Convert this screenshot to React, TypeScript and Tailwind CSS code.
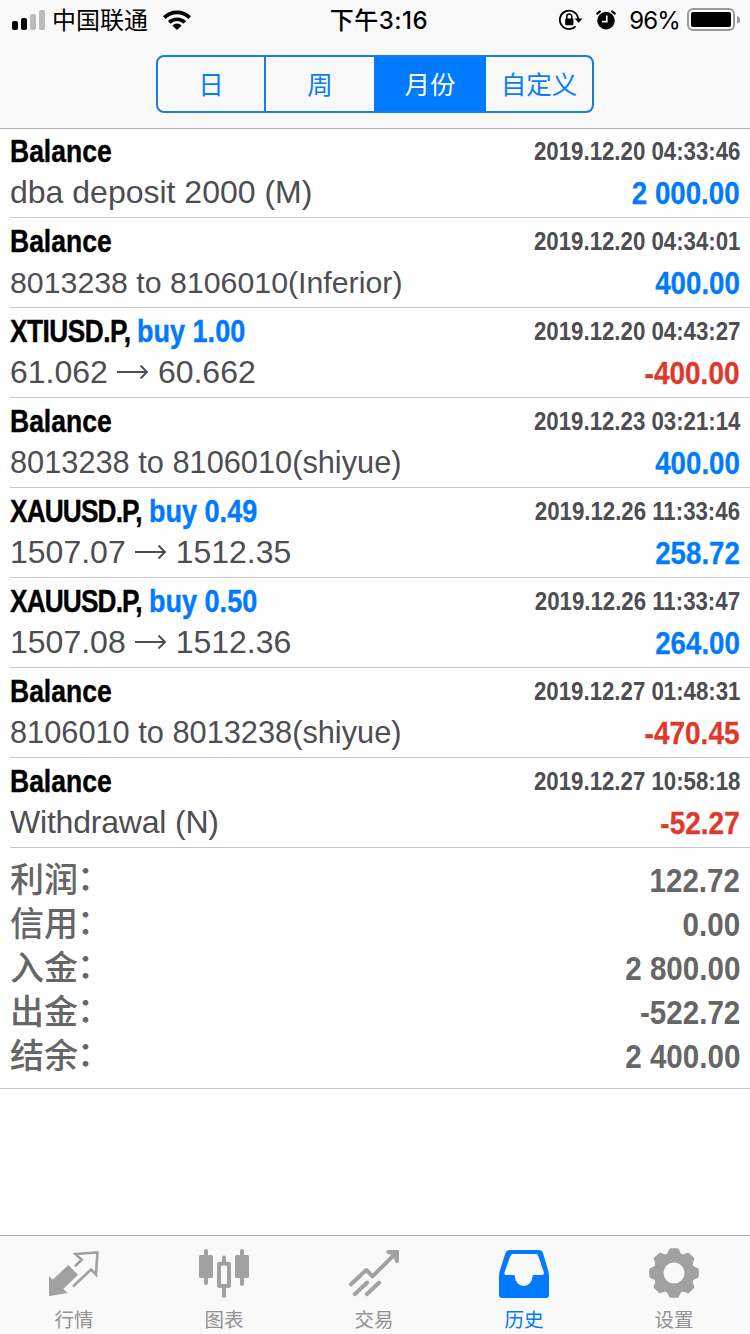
import type { ReactNode } from "react";
import clsx from "clsx";

type Deal = {
  symbol: string;
  side?: string;
  from: string;
  to?: string;
  time: string;
  amount: string;
  noteSize?: string;
};

const deals: Deal[] = [
  { symbol: "Balance", from: "dba deposit 2000 (M)", time: "2019.12.20 04:33:46", amount: "2 000.00" },
  { symbol: "Balance", from: "8013238 to 8106010(Inferior)", time: "2019.12.20 04:34:01", amount: "400.00", noteSize: "text-[30.3px]" },
  { symbol: "XTIUSD.P,", side: "buy 1.00", from: "61.062", to: "60.662", time: "2019.12.20 04:43:27", amount: "-400.00" },
  { symbol: "Balance", from: "8013238 to 8106010(shiyue)", time: "2019.12.23 03:21:14", amount: "400.00", noteSize: "text-[30.75px]" },
  { symbol: "XAUUSD.P,", side: "buy 0.49", from: "1507.07", to: "1512.35", time: "2019.12.26 11:33:46", amount: "258.72" },
  { symbol: "XAUUSD.P,", side: "buy 0.50", from: "1507.08", to: "1512.36", time: "2019.12.26 11:33:47", amount: "264.00" },
  { symbol: "Balance", from: "8106010 to 8013238(shiyue)", time: "2019.12.27 01:48:31", amount: "-470.45", noteSize: "text-[30.75px]" },
  { symbol: "Balance", from: "Withdrawal (N)", time: "2019.12.27 10:58:18", amount: "-52.27", noteSize: "text-[32px] tracking-[-0.2px]" },
];

const totals = [
  ["利润", "122.72"],
  ["信用", "0.00"],
  ["入金", "2 800.00"],
  ["出金", "-522.72"],
  ["结余", "2 400.00"],
];

const StatusBar = () => (
  <div className="flex h-10 items-center justify-between pl-3 pr-2.5 text-2xl leading-10 text-black">
    <div className="flex w-[240px] items-center">
      <svg className="mr-[7px] h-5 w-[33px] shrink-0" viewBox="0 0 33 20">
        <rect x="0" y="11" width="6" height="9" rx="2" />
        <rect x="9" y="8" width="6" height="12" rx="2" />
        <rect x="18" y="4" width="6" height="16" rx="2" fill="#bbb" />
        <rect x="27" y="0" width="6" height="20" rx="2" fill="#bbb" />
      </svg>
      <span className="pt-0.5">中国联通</span>
      <svg className="ml-[15px] h-5 w-7" viewBox="0 0 28 20" fill="none" stroke="#000" strokeWidth="3.6">
        <path d="M1.3 7.6a18 18 0 0 1 25.4 0" />
        <path d="M6.2 12.4a11.3 11.3 0 0 1 15.6 0" />
        <path d="M9.4 15.4a6.7 6.7 0 0 1 9.2 0L14 20z" fill="#000" stroke="none" />
      </svg>
    </div>
    <span className="pt-0.5 pl-1.5 font-medium tracking-[0.5px]">下午3:16</span>
    <div className="flex w-[240px] items-center justify-end">
      <svg className="mr-[13px] h-[22px] w-[24px]" viewBox="0 0 24 22" fill="none" stroke="#000" strokeWidth="1.8">
        <path d="M19.2 9.8A9.2 9.2 0 1 0 16.6 17.3" />
        <path d="M15.6 9.4H23.6L19.6 13.8z" fill="#000" stroke="none" />
        <rect x="6.2" y="9.6" width="8.2" height="6.6" rx="1" fill="#000" stroke="none" />
        <path d="M7.8 10V7.6a2.5 2.5 0 0 1 5 0V10" strokeWidth="1.5" />
      </svg>
      <svg className="mr-[13px] h-5 w-5" viewBox="0 0 20 20">
        <circle cx="10" cy="10.6" r="8.8" />
        <path d="M1.2 3.6 4 1.4M18.8 3.6 16 1.4" stroke="#000" strokeWidth="2" strokeLinecap="round" />
        <path d="M10.8 5.5V11.6H6" fill="none" stroke="#f9f9f9" strokeWidth="1.6" />
      </svg>
      <span className="mr-[7px] pt-0.5 tracking-[-0.9px]">96%</span>
      <svg className="h-6 w-[53px]" viewBox="0 0 53 24">
        <rect x="1" y="1" width="46" height="21" rx="5" fill="none" stroke="#999" strokeWidth="2" />
        <rect x="4" y="4" width="40" height="15" rx="2" />
        <path d="M50 8a3.8 3.8 0 0 1 0 7.5z" fill="#999" />
      </svg>
    </div>
  </div>
);

const PeriodSwitch = () => (
  <div className="mx-auto mt-[15px] flex h-[58px] w-[438px] overflow-hidden rounded-lg border-2 border-[#1b7be4] text-center text-[25.5px] leading-[55px] text-[#087cfa]">
    <div className="w-[108px] border-r-2 border-[#1b7be4]">日</div>
    <div className="w-[108px]">周</div>
    <div className="w-[112px] bg-[#007aff] text-white">月份</div>
    <div className="w-[106px]">自定义</div>
  </div>
);

const Arrow = () => (
  <svg className="mx-[9px] inline-block h-5 w-8 align-[1px]" viewBox="0 0 32 20" fill="none" stroke="currentColor" strokeWidth="1.9">
    <path d="M0 10H30M23.5 3.5 30 10 23.5 16.5" />
  </svg>
);

const DealRow = ({ deal }: { deal: Deal }) => (
  <div className="flex h-[90px] justify-between border-b border-[#c8c7cc] pr-2.5">
    <div className="pt-1 whitespace-nowrap">
      <div className="flex h-10 text-[32px] leading-[39px] font-bold text-black [-webkit-text-stroke:0.4px]">
        {deal.side ? (
          <>
            <span className={clsx("origin-left scale-x-[0.82]", deal.symbol === "XTIUSD.P," ? "w-[127px] tracking-[-0.6px]" : "w-[138.5px] tracking-[-1.05px]")}>
              {deal.symbol}
            </span>
            <span className="origin-left scale-x-[0.845] text-[#007aff]">{deal.side}</span>
          </>
        ) : (
          <span className="origin-left scale-x-[0.828]">{deal.symbol}</span>
        )}
      </div>
      <div className={clsx("h-10 leading-[41px] text-[#4d4d52]", deal.noteSize ?? "text-[32px]")}>
        {deal.from}
        {deal.to && (
          <>
            <Arrow />
            {deal.to}
          </>
        )}
      </div>
    </div>
    <div className="flex flex-col items-end pt-1 font-bold whitespace-nowrap">
      <div className="h-10 origin-right scale-x-[0.855] text-[26px] leading-[39px] text-[#4d4d52]">{deal.time}</div>
      <div
        className={clsx(
          "h-10 origin-right text-[32px] leading-[42px] [-webkit-text-stroke:0.3px]",
          deal.amount.startsWith("-") ? "scale-x-[0.875] text-[#e0392b]" : "scale-x-[0.865] text-[#007aff]"
        )}
      >
        {deal.amount}
      </div>
    </div>
  </div>
);

const QuotesIcon = () => (
  <>
    <path d="M0 28 3.7 31.7 19.3 17 29 26.7 14.3 41 18.5 45 .8 48Q0 48 0 47.2z" />
    <path d="M26 18.3 32.7 11.7 26.5 6 48.4 4.4 47 26.5 42 21.5 24 38.5" fill="none" stroke="currentColor" strokeWidth="2.6" />
  </>
);

const ChartIcon = () => (
  <>
    <rect x="0" y="7" width="14" height="23" rx="1.5" />
    <rect x="5" y="1" width="4" height="36" rx="2" />
    <rect x="20" y="15.7" width="10" height="22.3" rx="0.5" fill="none" stroke="currentColor" strokeWidth="4" strokeLinejoin="round" />
    <rect x="23" y="7.5" width="4" height="9" rx="2" />
    <rect x="23" y="38" width="4" height="12" rx="2" />
    <rect x="36" y="7" width="14" height="23" rx="1.5" />
    <rect x="41" y="1" width="4" height="37" rx="2" />
  </>
);

const TradeIcon = () => (
  <>
    <path
      d="M2 36.3 17.3 22 23.5 28.3 45.5 6.5M5.8 46.2 18 34.7M17.8 46.2 30 34.7"
      fill="none"
      stroke="currentColor"
      strokeWidth="4"
      strokeLinecap="round"
      strokeLinejoin="round"
    />
    <path d="M39 2H49a1 1 0 0 1 1 1V12.5a2 2 0 0 1-4 1L45 10 41.5 6.5 38.5 5.8A2 2 0 0 1 39 2z" />
  </>
);

const HistoryIcon = () => (
  <path
    fillRule="evenodd"
    d="M11 2H39.5Q43 2 44 5L49 22Q50 25 50 28V47Q50 50 47 50H3Q0 50 0 47V28Q0 25 1 22L6.5 5Q7.5 2 11 2zM14 6Q12 6 11.4 8L5.6 24Q4.8 27 7 27H14.5Q16 27 16 29A8.7 9 0 0 0 33.4 29Q33.4 27 35 27H43Q45.5 27 44.8 24L39.3 8Q38.6 6 36.8 6z"
  />
);

const SettingsIcon = () => (
  <>
    <circle cx="25" cy="25" r="15.5" fill="none" stroke="currentColor" strokeWidth="10" />
    {[0, 45, 90, 135, 180, 225, 270, 315].map((angle) => (
      <path
        key={angle}
        transform={`rotate(${angle} 25 25)`}
        d="M19.2 7 21.8 1.8H28.2L30.8 7z"
        stroke="currentColor"
        strokeWidth="3.2"
        strokeLinejoin="round"
      />
    ))}
  </>
);

const tabs: { label: string; icon: ReactNode; active?: boolean }[] = [
  { label: "行情", icon: <QuotesIcon /> },
  { label: "图表", icon: <ChartIcon /> },
  { label: "交易", icon: <TradeIcon /> },
  { label: "历史", icon: <HistoryIcon />, active: true },
  { label: "设置", icon: <SettingsIcon /> },
];

const App = () => {
  return (
    <div className="flex h-[1334px] w-[750px] flex-col overflow-hidden bg-white font-['Liberation_Sans','Noto_Sans_CJK_SC',sans-serif]">
      <header className="h-[129px] shrink-0 border-b border-[#b2b2b2] bg-[#f9f9f9] font-['Inter','Noto_Sans_CJK_SC',sans-serif]">
        <StatusBar />
        <PeriodSwitch />
      </header>

      <main className="-mt-px grow">
        <div className="pl-2.5">
          {deals.map((deal) => (
            <DealRow key={deal.time} deal={deal} />
          ))}
        </div>

        {/* Totals */}
        <div className="h-[241px] border-b border-[#c8c7cc] px-2.5 pt-2.5 text-[34px] text-[#666]">
          {totals.map(([label, value]) => (
            <div key={label} className="flex h-11 justify-between leading-[44px]">
              <span className="flex font-medium">
                {label}
                <span className="-mt-[2px] -ml-px">：</span>
              </span>
              <span className="origin-right scale-x-[0.87] font-bold">{value}</span>
            </div>
          ))}
        </div>
      </main>

      <nav className="flex h-[99px] shrink-0 border-t border-[#b2b2b2] bg-[#f9f9f9]">
        {tabs.map(({ label, icon, active }) => (
          <div key={label} className={clsx("flex w-[150px] flex-col items-center pt-3 pr-0.5", active ? "text-[#007aff]" : "text-[#a1a1a1]")}>
            <svg className="size-[50px] shrink-0" viewBox="0 0 50 50" fill="currentColor">
              {icon}
            </svg>
            <span className={clsx("mt-[7px] text-[19.5px] leading-[30px]", !active && "text-[#929292]")}>{label}</span>
          </div>
        ))}
      </nav>
    </div>
  );
};

export default App;
